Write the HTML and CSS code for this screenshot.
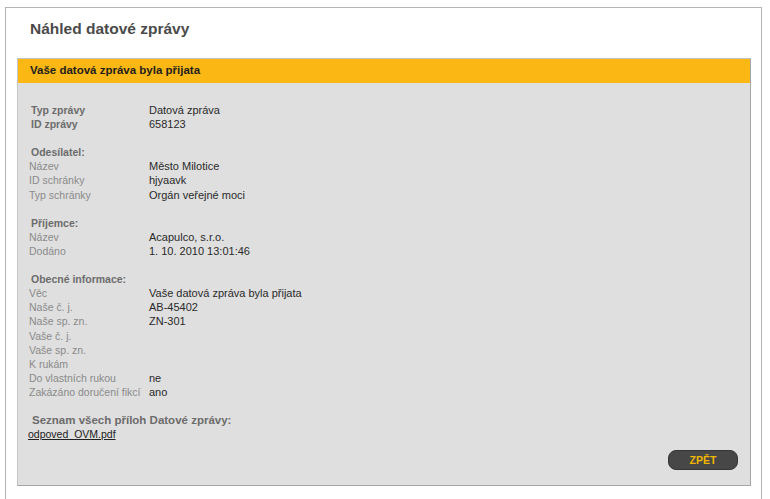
FILE: index.html
```html
<!DOCTYPE html>
<html lang="cs">
<head>
    <meta charset="UTF-8" />
    <meta name="viewport" content="width=device-width, initial-scale=1.0"/>
    <title>Náhled datové zprávy</title>
    <link rel="stylesheet" href="styles.css">
</head>
<body>
<div class="frame">
    <h1>Náhled datové zprávy</h1>

    <div class="box">
        <div class="box-head">Vaše datová zpráva byla přijata</div>

        <div class="box-body">
            <!-- Zprava -->
            <div class="group">
                <div class="row"><span class="label strong">Typ zprávy</span><span class="value">Datová zpráva</span></div>
                <div class="row"><span class="label strong">ID zprávy</span><span class="value">658123</span></div>
            </div>

            <!-- Odesilatel -->
            <div class="group">
                <div class="heading">Odesílatel:</div>
                <div class="row"><span class="label">Název</span><span class="value">Město Milotice</span></div>
                <div class="row"><span class="label">ID schránky</span><span class="value">hjyaavk</span></div>
                <div class="row"><span class="label">Typ schránky</span><span class="value">Orgán veřejné moci</span></div>
            </div>

            <!-- Prijemce -->
            <div class="group">
                <div class="heading">Příjemce:</div>
                <div class="row"><span class="label">Název</span><span class="value">Acapulco, s.r.o.</span></div>
                <div class="row"><span class="label">Dodáno</span><span class="value">1. 10. 2010 13:01:46</span></div>
            </div>

            <!-- Obecne informace -->
            <div class="group">
                <div class="heading">Obecné informace:</div>
                <div class="row"><span class="label">Věc</span><span class="value">Vaše datová zpráva byla přijata</span></div>
                <div class="row"><span class="label">Naše č. j.</span><span class="value">AB-45402</span></div>
                <div class="row"><span class="label">Naše sp. zn.</span><span class="value">ZN-301</span></div>
                <div class="row"><span class="label">Vaše č. j.</span><span class="value"></span></div>
                <div class="row"><span class="label">Vaše sp. zn.</span><span class="value"></span></div>
                <div class="row"><span class="label">K rukám</span><span class="value"></span></div>
                <div class="row"><span class="label">Do vlastních rukou</span><span class="value">ne</span></div>
                <div class="row"><span class="label">Zakázáno doručení fikcí</span><span class="value">ano</span></div>
            </div>

            <!-- Prilohy -->
            <div class="group attachments">
                <div class="heading">Seznam všech příloh Datové zprávy:</div>
                <a href="#" class="file">odpoved_OVM.pdf</a>
            </div>

            <div class="actions">
                <button class="back-btn">ZPĚT</button>
            </div>
        </div>
    </div>
</div>
</body>
</html>
```

FILE: styles.css
```css
body {
    margin: 0;
    background: #fff;
    font-family: "Liberation Sans", Arial, sans-serif;
}

.frame {
    margin: 7px 0 0 5px;
    width: 755px;
    height: 491px;
    border: 1px solid #b4b4b4;
    border-bottom: none;
}

h1 {
    margin: 12px 0 20px 24px;
    font-size: 15.5px;
    line-height: 18px;
    font-weight: bold;
    color: #4a4a4a;
}

.box {
    margin: 0 10px 0 11px;
    border: 1px solid #c4c4c4;
    border-right-color: #a6a6a6;
    border-bottom-color: #a6a6a6;
}

.box-head {
    background-color: #fbb714;
    padding: 0 12px 2px;
    line-height: 22px;
    font-size: 11.5px;
    font-weight: bold;
    color: #1e1e1e;
}

.box-body {
    background-color: #dfdfdf;
    padding: 20px 12px 15px 11px;
    font-size: 11px;
    line-height: 14.1px;
}

.group + .group {
    margin-top: 14.1px;
}

.row {
    display: grid;
    grid-template-columns: 120px 1fr;
    height: 14.1px;
}

.label {
    font-size: 10.5px;
    color: #8a8a8a;
    white-space: nowrap;
}

.label.strong {
    padding-left: 2px;
    font-weight: bold;
    color: #6c6c6c;
}

.value {
    color: #2a2a2a;
}

.heading {
    padding-left: 2px;
    font-size: 10.5px;
    font-weight: bold;
    color: #6c6c6c;
}

.attachments .heading {
    padding-left: 3px;
    font-size: 11.5px;
}

.file {
    margin-left: -1px;
    font-size: 10.5px;
    color: #222;
    text-decoration: underline;
}

.actions {
    display: flex;
    justify-content: flex-end;
    margin-top: 9px;
}

.back-btn {
    width: 70px;
    height: 20px;
    padding: 0;
    background-color: #474747;
    border: 1px solid #363636;
    border-radius: 8px;
    color: #f2b700;
    font-family: "Liberation Sans", Arial, sans-serif;
    font-size: 10.5px;
    font-weight: bold;
    cursor: pointer;
}
```
